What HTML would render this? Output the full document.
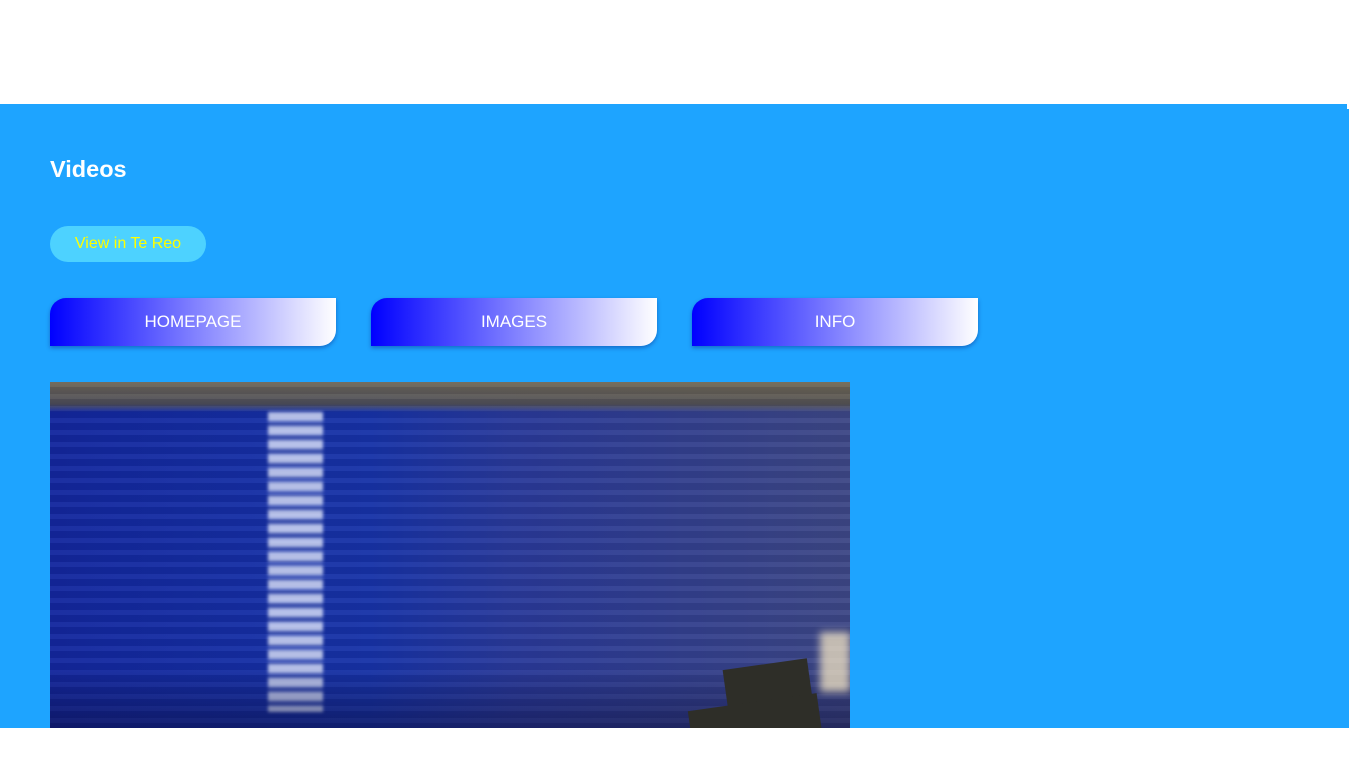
<!DOCTYPE html>
<html><head><meta charset="utf-8"><style>
html,body{margin:0;padding:0;width:1366px;height:768px;background:#fff;overflow:hidden;font-family:"Liberation Sans",Arial,sans-serif}
.main{position:absolute;left:0;top:104px;width:1349px;height:624px;background:#1ea4ff}
.notch{position:absolute;left:1347px;top:104px;width:2px;height:5px;background:#fff}
h1{position:absolute;left:50px;margin:0;color:#fff;font-size:23.5px;font-weight:bold}
.tereo{position:absolute;left:50px;top:226px;width:156px;height:36px;border-radius:18px;background:#4dd2ff;color:#ffff00;font-size:16px;line-height:36px;text-align:center}
.nav{position:absolute;top:298px;width:286px;height:48px;border-radius:16px 0 16px 0;background:linear-gradient(90deg,#0000ff,#ffffff);color:#fff;font-size:17px;line-height:48px;text-align:center;box-shadow:0 2px 4px rgba(0,0,100,.35)}
.video{position:absolute;left:50px;top:382px;width:800px;height:346px;overflow:hidden;
background:
linear-gradient(180deg,rgba(120,110,80,.9) 0,rgba(90,85,70,.8) 22px,rgba(0,0,0,0) 30px),
linear-gradient(90deg,#13279e 0,#1733a8 40%,#2a3a9a 58%,#34418e 80%,#3e4886 100%);}
.stripes{position:absolute;inset:0;background:repeating-linear-gradient(180deg,rgba(255,255,255,.04) 0 5px,rgba(0,0,30,.08) 5px 12px)}
.streak{position:absolute;left:218px;top:30px;width:55px;height:300px;background:repeating-linear-gradient(180deg,rgba(235,240,255,.75) 0 9px,rgba(235,240,255,.15) 9px 14px);filter:blur(1.5px)}
.bottom{position:absolute;left:0;right:0;bottom:0;height:60px;background:linear-gradient(180deg,rgba(10,10,50,0),rgba(10,10,50,.45))}
.block{position:absolute;left:675px;top:282px;width:85px;height:40px;background:#2e2e28;transform:rotate(-8deg)}
.block2{position:absolute;left:640px;top:320px;width:130px;height:40px;background:#2e2e28;transform:rotate(-8deg)}
.glare{position:absolute;left:770px;top:250px;width:30px;height:60px;background:rgba(255,240,200,.7);filter:blur(4px)}
</style></head><body>
<div class="main"><h1 style="top:52px">Videos</h1></div>
<div class="notch"></div>
<div class="tereo">View in Te Reo</div>
<div class="nav" style="left:50px">HOMEPAGE</div>
<div class="nav" style="left:371px">IMAGES</div>
<div class="nav" style="left:692px">INFO</div>
<div class="video"><div class="stripes"></div><div class="streak"></div><div class="bottom"></div><div class="glare"></div><div class="block"></div><div class="block2"></div></div>
</body></html>
